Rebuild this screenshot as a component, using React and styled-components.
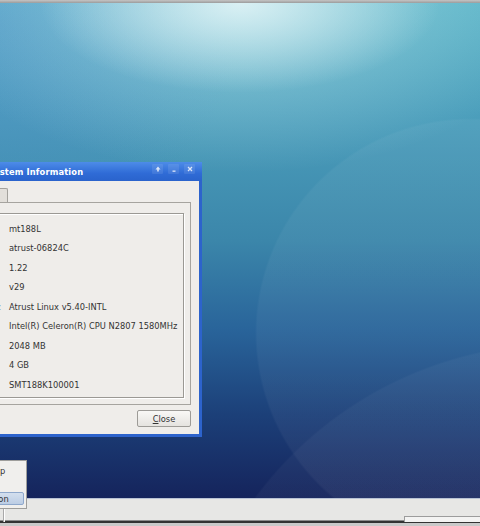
import React from 'react';
import styled, { createGlobalStyle } from 'styled-components';

const GlobalStyle = createGlobalStyle`
    html, body {
        margin: 0;
        padding: 0;
        width: 480px;
        height: 526px;
        overflow: hidden;
        font-family: "DejaVu Sans", "Noto Sans", sans-serif;
    }
`

const Screen = styled.div`
    position: relative;
    width: 480px;
    height: 526px;
    display: flex;
    flex-direction: column;
    overflow: hidden;
`

const TopStrip = styled.div`
    height: 3px;
    background: linear-gradient(#c4c4c4, #9c9c9c);
`

const Desktop = styled.div`
    position: relative;
    flex: 1;
    background:
        radial-gradient(ellipse 200px 90px at 240px 0px, rgba(230, 246, 248, 0.85), rgba(230, 246, 248, 0) 100%),
        radial-gradient(ellipse 320px 170px at 240px 0px, rgba(200, 234, 240, 0.5), rgba(200, 234, 240, 0) 100%),
        radial-gradient(circle 215px at 470px 330px, rgba(255, 255, 255, 0.045) 99%, rgba(255, 255, 255, 0) 100%),
        radial-gradient(circle 380px at 560px 720px, rgba(255, 255, 255, 0.035) 99.5%, rgba(255, 255, 255, 0) 100%),
        radial-gradient(ellipse 240px 220px at 0px 20px, rgba(80, 120, 205, 0.3), rgba(80, 120, 205, 0) 100%),
        linear-gradient(#5ab4c7 0%, #4c9fbc 22%, #3b86aa 48%, #29649a 66%, #1c4079 83%, #15245c 100%);
`

const Window = styled.div`
    position: absolute;
    left: -100px;
    top: 159px;
    width: 302px;
    display: flex;
    flex-direction: column;
    background: #2d63cc;
    padding: 0 3px 3px 3px;
    box-sizing: border-box;
`

const TitleBar = styled.div`
    height: 19px;
    display: flex;
    align-items: flex-start;
    background: linear-gradient(#4d8ce8, #2f6bd6 60%, #2a63cc);
    margin: 0 -3px;
    padding: 0 7px 0 0;
`

const Title = styled.div`
    flex: 1;
    padding: 5px 0 0 88px;
    color: #ffffff;
    font-size: 8.3px;
    font-weight: bold;
    letter-spacing: 0.15px;
`

const TitleButtons = styled.div`
    display: flex;
    gap: 5px;
    padding-top: 2px;
`

const TitleButton = styled.div`
    width: 11px;
    height: 10px;
    display: flex;
    align-items: center;
    justify-content: center;
    background: rgba(255, 255, 255, 0.09);
    border-radius: 1px;
`

const Body = styled.div`
    background: #efedea;
    padding: 7px 8px 7px 8px;
    display: flex;
    flex-direction: column;
`

const Tabs = styled.div`
    display: flex;
    height: 14px;
`

const Tab = styled.div`
    height: 14px;
    box-sizing: border-box;
    padding: 2px 9px 0 10px;
    font-size: 8.3px;
    color: #666;
    background: #e2dfda;
    border: 1px solid #a3a19c;
    border-bottom: none;
    border-radius: 2px 2px 0 0;
`

const Notebook = styled.div`
    height: 203px;
    box-sizing: border-box;
    border: 1px solid #a6a49f;
    padding: 10px 6px 6px 6px;
`

const InfoFrame = styled.div`
    height: 100%;
    box-sizing: border-box;
    border: 1px solid #9b9994;
    box-shadow: inset 1px 1px 0 #ffffff, 1px 1px 0 #ffffff;
    padding: 5px 8px 0 8px;
    display: grid;
    grid-template-columns: auto 1fr;
    grid-auto-rows: 19.5px;
    column-gap: 8px;
    align-items: center;
    font-size: 8.3px;
    color: #333333;
`

const Cell = styled.div`
    white-space: nowrap;
`

const ButtonRow = styled.div`
    display: flex;
    justify-content: flex-end;
    margin-top: 5px;
`

const PushButton = styled.div`
    width: 54px;
    height: 17px;
    box-sizing: border-box;
    display: flex;
    align-items: center;
    justify-content: center;
    font-size: 8.3px;
    color: #333;
    background: linear-gradient(#f9f8f6, #e5e3df);
    border: 1px solid #9d9b97;
    border-radius: 2px;

    u {
        text-decoration: underline;
        text-underline-offset: 1px;
    }
`

const Taskbar = styled.div`
    height: 28px;
    display: flex;
    flex-direction: column;
`

const PanelArea = styled.div`
    position: relative;
    height: 22px;
    background: #e7e7e5;
    border-top: 1px solid #b8c2d4;
    box-sizing: border-box;
`

const StartButton = styled.div`
    position: absolute;
    left: -40px;
    top: 9px;
    width: 43px;
    height: 14px;
    border-right: 1px solid #a9a9a9;
    box-shadow: 1px 0 0 #ffffff;
`

const TrayArea = styled.div`
    position: absolute;
    right: 0;
    top: 17px;
    width: 75px;
    height: 5px;
    background: #f3f3f2;
    border-top: 1px solid #9c9c9c;
    border-left: 1px solid #9c9c9c;
`

const PanelEdge = styled.div`
    height: 6px;
    background: linear-gradient(#8c8c8c 0, #8c8c8c 1px, #333333 1px, #333333 3px, #c9c9c9 3px);
`

const Menu = styled.div`
    position: absolute;
    left: -80px;
    top: 460px;
    width: 107px;
    box-sizing: border-box;
    padding: 3px 2px;
    background: #f0efed;
    border: 1px solid #9e9e9c;
    display: flex;
    flex-direction: column;
    gap: 1px;
    font-size: 8.3px;
    color: #333;
`

const MenuItem = styled.div`
    height: 13px;
    display: flex;
    align-items: center;
    padding-left: 57px;
    box-sizing: border-box;
    border: 1px solid ${props => (props.active ? '#8ea8cc' : 'transparent')};
    border-radius: 2px;
    background: ${props => (props.active ? 'linear-gradient(#d3dfee, #bccde4)' : 'transparent')};
`

const rows = [
    ['Model Name:', 'mt188L'],
    ['Host Name:', 'atrust-06824C'],
    ['BIOS Version:', '1.22'],
    ['EC Version:', 'v29'],
    ['Firmware Version:', 'Atrust Linux v5.40-INTL'],
    ['CPU:', 'Intel(R) Celeron(R) CPU N2807 1580MHz'],
    ['Memory:', '2048 MB'],
    ['Flash:', '4 GB'],
    ['Serial Number:', 'SMT188K100001'],
];

const Glyph = ({ kind }) => (
    <svg width="8" height="8" viewBox="0 0 8 8">
        {kind === 'up' && <path d="M4 1.5 L6.5 4.5 H4.8 V6.5 H3.2 V4.5 H1.5 Z" fill="#fff" opacity="0.8" />}
        {kind === 'min' && <rect x="2.5" y="5.5" width="3" height="1.3" fill="#fff" opacity="0.8" />}
        {kind === 'close' && (
            <path d="M2 2 L6 6 M6 2 L2 6" stroke="#fff" strokeWidth="1.3" opacity="0.8" />
        )}
    </svg>
);

const App = () => (
    <Screen>
        <GlobalStyle />
        <TopStrip />
        <Desktop>
            <Window>
                <TitleBar>
                    <Title>System Information</Title>
                    <TitleButtons>
                        <TitleButton><Glyph kind="up" /></TitleButton>
                        <TitleButton><Glyph kind="min" /></TitleButton>
                        <TitleButton><Glyph kind="close" /></TitleButton>
                    </TitleButtons>
                </TitleBar>
                <Body>
                    <Tabs>
                        <Tab>General</Tab>
                        <Tab>Basic</Tab>
                    </Tabs>
                    <Notebook>
                        <InfoFrame>
                            {rows.map(([label, value]) => (
                                <React.Fragment key={label}>
                                    <Cell>{label}</Cell>
                                    <Cell>{value}</Cell>
                                </React.Fragment>
                            ))}
                        </InfoFrame>
                    </Notebook>
                    <ButtonRow>
                        <PushButton><span><u>C</u>lose</span></PushButton>
                    </ButtonRow>
                </Body>
            </Window>
        </Desktop>
        <Taskbar>
            <PanelArea>
                <StartButton />
                <TrayArea />
            </PanelArea>
            <PanelEdge />
        </Taskbar>
        <Menu>
            <MenuItem>Setup</MenuItem>
            <MenuItem>Exit</MenuItem>
            <MenuItem active>Option</MenuItem>
        </Menu>
    </Screen>
);

export default App;
